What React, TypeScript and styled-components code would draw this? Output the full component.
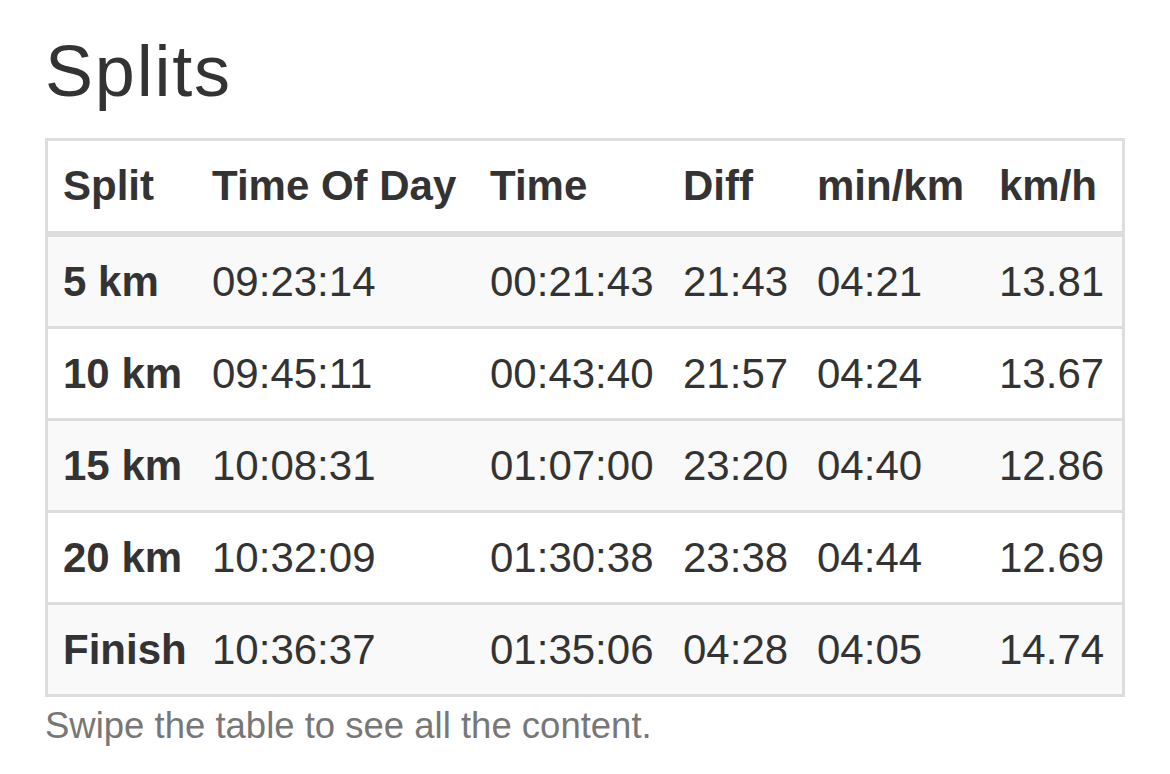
import React from "react";
import styled, { createGlobalStyle } from "styled-components";

const GlobalStyle = createGlobalStyle`
  html, body {
    margin: 0;
    padding: 0;
    background: #ffffff;
  }
  body {
    font-family: "Liberation Sans", Arial, Helvetica, sans-serif;
    color: #333333;
  }
`;

const Page = styled.div`
  padding: 32px 45px 0 45px;
  width: 1170px;
  box-sizing: border-box;
`;

const Heading = styled.h3`
  margin: 0 0 27px 0;
  font-size: 72px;
  line-height: 79px;
  font-weight: 400;
  letter-spacing: 1.8px;
  color: #333333;
`;

const TableWrap = styled.div`
  border: 3px solid #dddddd;
  width: 100%;
  box-sizing: border-box;
  overflow: hidden;
`;

const Table = styled.table`
  width: 100%;
  border-collapse: collapse;
  border-spacing: 0;
  table-layout: fixed;
  font-size: 42px;
`;

const HeadCell = styled.th`
  text-align: left;
  font-weight: 700;
  padding: 15px 15px;
  line-height: 60px;
  border-bottom: 6px solid #dddddd;
  white-space: nowrap;
  vertical-align: bottom;
`;

const Row = styled.tr<{ $striped: boolean }>`
  background: ${(p) => (p.$striped ? "#f9f9f9" : "#ffffff")};
`;

const Cell = styled.td<{ $bold?: boolean }>`
  padding: 15px 15px;
  line-height: 59px;
  border-top: 3px solid #dddddd;
  font-weight: ${(p) => (p.$bold ? 700 : 400)};
  white-space: nowrap;
  vertical-align: top;
`;

const Note = styled.p`
  margin: 4px 0 0 0;
  font-size: 36.5px;
  line-height: 50px;
  color: #777777;
`;

const columns = [
  { label: "Split", width: 149 },
  { label: "Time Of Day", width: 278 },
  { label: "Time", width: 193 },
  { label: "Diff", width: 134 },
  { label: "min/km", width: 182 },
  { label: "km/h", width: 138 },
];

const rows = [
  ["5 km", "09:23:14", "00:21:43", "21:43", "04:21", "13.81"],
  ["10 km", "09:45:11", "00:43:40", "21:57", "04:24", "13.67"],
  ["15 km", "10:08:31", "01:07:00", "23:20", "04:40", "12.86"],
  ["20 km", "10:32:09", "01:30:38", "23:38", "04:44", "12.69"],
  ["Finish", "10:36:37", "01:35:06", "04:28", "04:05", "14.74"],
];

export default function App() {
  return (
    <>
      <GlobalStyle />
      <Page>
        <Heading>Splits</Heading>
        <TableWrap>
          <Table>
            <colgroup>
              {columns.map((c) => (
                <col key={c.label} style={{ width: c.width }} />
              ))}
            </colgroup>
            <thead>
              <tr>
                {columns.map((c) => (
                  <HeadCell key={c.label}>{c.label}</HeadCell>
                ))}
              </tr>
            </thead>
            <tbody>
              {rows.map((r, i) => (
                <Row key={r[0]} $striped={i % 2 === 0}>
                  {r.map((v, j) => (
                    <Cell key={j} $bold={j === 0}>
                      {v}
                    </Cell>
                  ))}
                </Row>
              ))}
            </tbody>
          </Table>
        </TableWrap>
        <Note>Swipe the table to see all the content.</Note>
      </Page>
    </>
  );
}
